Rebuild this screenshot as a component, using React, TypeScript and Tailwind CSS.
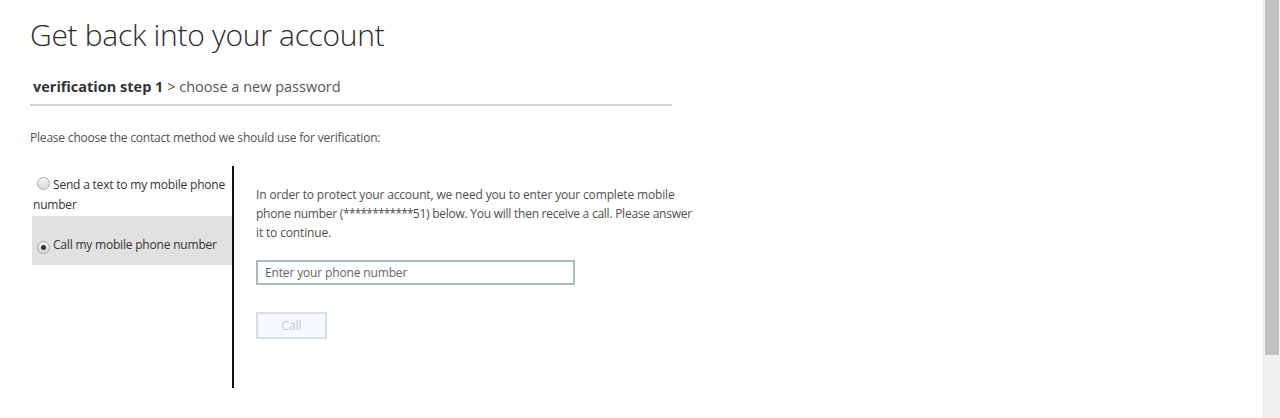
import { useState } from "react";

export default function App() {
  const [method, setMethod] = useState<"text" | "call">("call");

  return (
    <div className="flex h-[418px] w-[1280px] overflow-hidden bg-white font-['Open_Sans',sans-serif]">
      <div className="flex-1 pl-[30px]">
        <h1 className="mt-[13px] text-[30px] font-light leading-[44px] tracking-[-0.3px] text-[#2b2b2b]">
          Get back into your account
        </h1>
        <div className="mt-[20px] w-[642px] border-b-2 border-[#d2d2d2] pb-[7px] pl-[3px] text-[14.5px] leading-[20px] text-[#444]">
          <span className="font-bold text-[#333]">verification step 1</span>
          <span className="text-[#555]"> &gt; choose a new password</span>
        </div>
        <p className="mt-[23px] text-[12px] leading-[17px] tracking-[-0.2px] text-[#505050]">
          Please choose the contact method we should use for verification:
        </p>

        <div className="mt-[20px] flex">
          <div className="w-[202px] pl-[2px] pt-[8px] text-[12px] leading-[20px] tracking-[-0.2px] text-[#333]">
            <label
              onClick={() => setMethod("text")}
              className={`block cursor-pointer py-[1px] pl-[1px] ${method === "text" ? "bg-[#e1e1e1]" : ""}`}
            >
              <Radio checked={method === "text"} />
              Send a text to my mobile phone number
            </label>
            <label
              onClick={() => setMethod("call")}
              className={`block h-[49px] cursor-pointer pl-[1px] pt-[19px] ${method === "call" ? "bg-[#e1e1e1]" : ""}`}
            >
              <Radio checked={method === "call"} />
              Call my mobile phone number
            </label>
          </div>
          <div className="h-[222px] w-[2px] bg-[#111]" />
          <div className="pl-[22px] pt-[19px]">
            <p className="whitespace-nowrap text-[12px] leading-[19px] tracking-[-0.15px] text-[#505050]">
              In order to protect your account, we need you to enter your complete mobile
              <br />
              <span className="tracking-[-0.25px]">
                phone number (<span className="tracking-[-0.8px]">************</span>51) below. You will
                then receive a call. Please answer
              </span>
              <br />
              it to continue.
            </p>
            <input
              type="text"
              placeholder="Enter your phone number"
              className="mt-[18px] block h-[25px] w-[319px] border-2 border-[#a7bcb8] px-[7px] text-[12px] tracking-[-0.15px] text-[#333] outline-none placeholder:text-[#666]"
            />
            <button
              disabled
              className="mt-[27px] block h-[27px] w-[71px] border-2 border-[#d5dfe5] bg-[#f7fafc] text-[12px] text-[#c2c9cd]"
            >
              Call
            </button>
          </div>
        </div>
      </div>
      <div className="flex w-[17px] flex-col border-l border-[#e8e8e8] bg-[#f0f0f0] px-[1px]">
        <div className="h-[355px] bg-[#c1c1c1]" />
      </div>
    </div>
  );
}

function Radio({ checked }: { checked: boolean }) {
  return (
    <span className="ml-[4px] mr-[3px] inline-flex h-[13px] w-[13px] items-center justify-center rounded-full border border-[#a8a8a8] bg-gradient-to-b from-[#f4f4f4] to-[#d8d8d8] align-[-1px]">
      {checked && <span className="h-[5px] w-[5px] rounded-full bg-[#333]" />}
    </span>
  );
}
